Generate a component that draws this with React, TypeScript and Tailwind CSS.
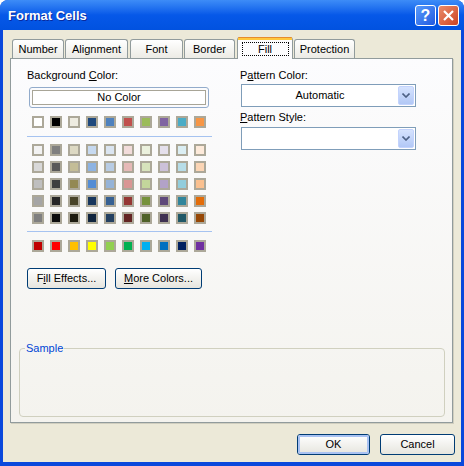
import React from 'react';

const themeRow = ['#FFFFFF', '#000000', '#EEECE1', '#1F497D', '#4F81BD', '#C0504D', '#9BBB59', '#8064A2', '#4BACC6', '#F79646'];

const tintRows = [
  ['#F2F2F2', '#7F7F7F', '#DDD9C3', '#C6D9F0', '#DBE5F1', '#F2DCDB', '#EBF1DD', '#E5E0EC', '#DBEEF3', '#FDEADA'],
  ['#D8D8D8', '#595959', '#C4BD97', '#8DB3E2', '#B8CCE4', '#E5B9B7', '#D7E3BC', '#CCC1D9', '#B7DDE8', '#FBD5B5'],
  ['#BFBFBF', '#3F3F3F', '#938953', '#548DD4', '#95B3D7', '#D99694', '#C3D69B', '#B2A2C7', '#92CDDC', '#FAC08F'],
  ['#A5A5A5', '#262626', '#494429', '#17365D', '#366092', '#953734', '#76923C', '#5F497A', '#31859B', '#E36C09'],
  ['#7F7F7F', '#0C0C0C', '#1D1B10', '#0F243E', '#244061', '#632423', '#4F6128', '#3F3151', '#205867', '#974806'],
];

const standardRow = ['#C00000', '#FF0000', '#FFC000', '#FFFF00', '#92D050', '#00B050', '#00B0F0', '#0070C0', '#002060', '#7030A0'];

const tabs = [
  { label: 'Number', w: 'w-[52px] mr-[1px]' },
  { label: 'Alignment', w: 'w-[63px] mr-[2px]' },
  { label: 'Font', w: 'w-[53px] mr-[1px]' },
  { label: 'Border', w: 'w-[51px] mr-[2px]' },
  { label: 'Fill', w: 'w-[56px] mr-[1px]', active: true },
  { label: 'Protection', w: 'w-[61px]' },
];

function SwatchRow({ colors }: { colors: string[] }) {
  return (
    <div className="flex gap-[6px]">
      {colors.map((c, i) => (
        <div key={i} className="h-[12px] w-[12px] border-2 border-[#aca899]" style={{ backgroundColor: c }} />
      ))}
    </div>
  );
}

function XpButton({ children, className = '', isDefault = false }: { children: React.ReactNode; className?: string; isDefault?: boolean }) {
  return (
    <div className={`flex h-[21px] items-center justify-center rounded-[3px] border border-[#003c74] bg-gradient-to-b from-white to-[#e6e5de] ${className}`}>
      <div className={`flex h-full w-full items-center justify-center rounded-[2px] ${isDefault ? 'border-2 border-[#a9c2f2]' : ''}`}>
        {children}
      </div>
    </div>
  );
}

function Dropdown({ value }: { value?: string }) {
  return (
    <div className="flex h-[23px] w-[175px] items-center border border-[#7f9db9] bg-white pr-[1px]">
      <div className="flex-1 text-center">{value}</div>
      <div className="flex h-[19px] w-[16px] items-center justify-center rounded-[2px] border border-[#c3d3fd] bg-gradient-to-b from-[#d6e3fe] to-[#b2c8f6]">
        <svg width="8" height="5" viewBox="0 0 8 5">
          <path d="M0.5 0.5 L4 4 L7.5 0.5" fill="none" stroke="#4d6185" strokeWidth="1.6" />
        </svg>
      </div>
    </div>
  );
}

export default function App() {
  return (
    <div className="h-[466px] w-[464px] bg-white font-['Liberation_Sans',Arial,sans-serif] text-[11px] leading-[13px] text-black">
      <div className="flex h-full flex-col overflow-hidden rounded-t-[8px] bg-[#0a48dc]">
        {/* title bar */}
        <div className="flex h-[30px] shrink-0 items-center bg-gradient-to-b from-[#3d8cf7] via-[#0658e8] to-[#0152e0] pl-[8px] pr-[5px]">
          <div className="flex-1 text-[13px] font-bold text-white [text-shadow:1px_1px_0_#0a2a9c]">Format Cells</div>
          <div className="flex gap-[2px]">
            <div className="flex h-[21px] w-[21px] items-center justify-center rounded-[3px] border border-white bg-gradient-to-br from-[#5a9bfb] to-[#2158e0] text-[16px] font-bold text-white">
              ?
            </div>
            <div className="flex h-[21px] w-[21px] items-center justify-center rounded-[3px] border border-white bg-gradient-to-br from-[#ea8b6a] to-[#cc4220]">
              <svg width="11" height="11" viewBox="0 0 11 11">
                <path d="M1 1 L10 10 M10 1 L1 10" stroke="white" strokeWidth="2.2" />
              </svg>
            </div>
          </div>
        </div>

        {/* client */}
        <div className="mx-[3px] mb-[4px] flex flex-1 flex-col bg-[#ece9d8]">
          <div className="ml-[9px] mt-[7px] flex h-[21px] items-end">
            {tabs.map((t) =>
              t.active ? (
                <div
                  key={t.label}
                  className={`relative z-10 -mb-[1px] flex h-[22px] flex-col rounded-t-[3px] border-x border-[#919b9c] bg-[#fcfcfe] ${t.w}`}
                >
                  <div className="h-[1px] rounded-t-[3px] bg-[#e68b2c]" />
                  <div className="h-[2px] bg-[#ffc73c]" />
                  <div className="flex flex-1 items-center justify-center pb-[1px]">
                    <span className="flex h-[14px] w-[47px] items-center justify-center border border-dotted border-black">{t.label}</span>
                  </div>
                </div>
              ) : (
                <div
                  key={t.label}
                  className={`flex h-[19px] items-center justify-center rounded-t-[3px] border-x border-t border-[#919b9c] bg-gradient-to-b from-white to-[#ecebe5] ${t.w}`}
                >
                  {t.label}
                </div>
              )
            )}
          </div>

          {/* panel */}
          <div className="ml-[7px] flex h-[365px] w-[443px] flex-col border border-[#919b9c] bg-gradient-to-b from-[#fcfcfe] to-[#f4f3ee] shadow-[1px_1px_0_#d0cebf]">
            <div className="flex pt-[10px]">
              {/* left column */}
              <div className="ml-[16px] w-[213px]">
                <div>
                  Background <span className="underline">C</span>olor:
                </div>
                <div className="ml-[2px] mt-[5px] h-[21px] w-[180px] rounded-[3px] border border-[#92abcb] p-[2px]">
                  <div className="flex h-full items-center justify-center border border-[#a8a597] bg-white">No Color</div>
                </div>
                <div className="ml-[5px] mt-[8px]">
                  <SwatchRow colors={themeRow} />
                </div>
                <div className="mt-[8px] h-[1px] w-[185px] bg-[#a6c3f0]" />
                <div className="ml-[5px] mt-[7px] flex flex-col gap-[5px]">
                  {tintRows.map((r, i) => (
                    <SwatchRow key={i} colors={r} />
                  ))}
                </div>
                <div className="mt-[7px] h-[1px] w-[185px] bg-[#a6c3f0]" />
                <div className="ml-[5px] mt-[8px]">
                  <SwatchRow colors={standardRow} />
                </div>
                <div className="mt-[16px] flex gap-[9px]">
                  <XpButton className="w-[79px]">
                    <span>
                      F<span className="underline">i</span>ll Effects...
                    </span>
                  </XpButton>
                  <XpButton className="w-[87px]">
                    <span>
                      <span className="underline">M</span>ore Colors...
                    </span>
                  </XpButton>
                </div>
              </div>

              {/* right column */}
              <div className="w-[176px]">
                <div>
                  P<span className="underline">a</span>ttern Color:
                </div>
                <div className="ml-[1px] mt-[2px]">
                  <Dropdown value="Automatic" />
                </div>
                <div className="mt-[4px]">
                  <span className="underline">P</span>attern Style:
                </div>
                <div className="ml-[1px] mt-[3px]">
                  <Dropdown />
                </div>
              </div>
            </div>

            <div className="flex-1" />

            <fieldset className="mb-[5px] ml-[8px] h-[75px] w-[426px] rounded-[4px] border border-[#d0d0bf]">
              <legend className="ml-[5px] px-[1px] text-[#0046d5]">Sample</legend>
            </fieldset>
          </div>

          {/* dialog buttons */}
          <div className="mt-[11px] flex justify-end gap-[10px] pr-[6px]">
            <XpButton className="w-[73px]" isDefault>
              OK
            </XpButton>
            <XpButton className="w-[75px]">Cancel</XpButton>
          </div>
        </div>
      </div>
    </div>
  );
}
